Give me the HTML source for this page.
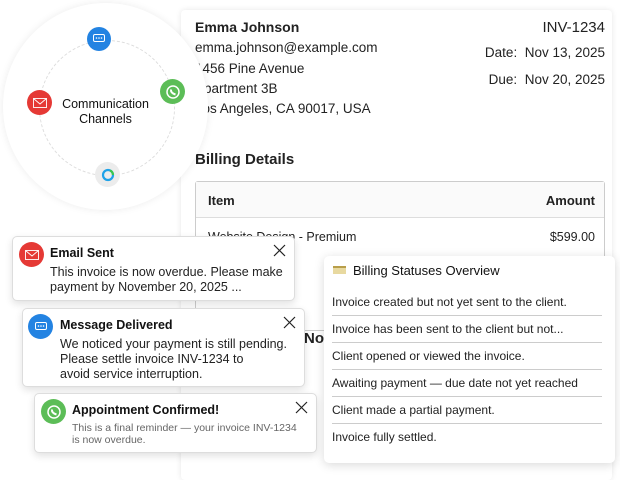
<!DOCTYPE html>
<html><head><style>
*{box-sizing:border-box;margin:0;padding:0}
body{width:620px;height:470px;background:#fff;font-family:"Liberation Sans",sans-serif;color:#111;position:relative;overflow:hidden}
.abs{position:absolute}
.card{position:absolute;left:181px;top:10px;width:431px;height:470px;background:#fff;border-radius:4px;box-shadow:0 0 6px rgba(0,0,0,.1)}
.t{position:absolute;font-size:13.5px;color:#222;white-space:nowrap}
.circle{position:absolute;left:3px;top:3px;width:205px;height:207px;border-radius:50%;background:#fff;box-shadow:0 0 8px rgba(0,0,0,.08)}
.dash{position:absolute;left:36px;top:37px;width:136px;height:136px;border-radius:50%;border:1px dashed #ddd}
.ic{position:absolute;border-radius:50%;display:flex;align-items:center;justify-content:center}
.note{position:absolute;background:#fff;border:1px solid #ddd;border-radius:5px;box-shadow:0 3px 8px rgba(0,0,0,.12)}
.note h4{position:absolute;left:37px;top:9px;font-size:12.5px;font-weight:bold;color:#111}
.note p{position:absolute;left:37px;font-size:12.5px;line-height:15px;color:#222;white-space:nowrap}
.x{position:absolute;width:13px;height:13px}
.row{position:absolute;left:8px;width:270px;font-size:12px;color:#222;border-bottom:1px solid #ccc;height:27px;line-height:26px;white-space:nowrap}
</style></head><body>
<div class="card">
<div class="t" style="left:14px;top:9px;font-weight:bold;font-size:14px">Emma Johnson</div>
<div class="t" style="left:14px;top:30px">emma.johnson@example.com</div>
<div class="t" style="left:14px;top:51px">1456 Pine Avenue</div>
<div class="t" style="left:14px;top:71px">Apartment 3B</div>
<div class="t" style="left:14px;top:91px">Los Angeles, CA 90017, USA</div>
<div class="t" style="right:7px;top:9px;font-size:15px">INV-1234</div>
<div class="t" style="right:7px;top:35px">Date:&nbsp; Nov 13, 2025</div>
<div class="t" style="right:7px;top:62px">Due:&nbsp; Nov 20, 2025</div>
<div class="t" style="left:14px;top:141px;font-size:15px;font-weight:bold">Billing Details</div>
<div class="abs" style="left:14px;top:171px;width:410px;height:150px;border:1px solid #ccc;border-radius:3px">
<div class="abs" style="left:0;top:0;width:408px;height:36px;background:#fafafa;border-bottom:1px solid #ddd"></div>
<div class="t" style="left:12px;top:11px;font-weight:bold;font-size:13px">Item</div>
<div class="t" style="right:9px;top:11px;font-weight:bold;font-size:13px">Amount</div>
<div class="t" style="left:12px;top:48px;font-size:12.5px">Website Design - Premium</div>
<div class="t" style="right:9px;top:48px;font-size:12.5px">$599.00</div>
</div>
<div class="t" style="left:123px;top:320px;font-size:15px;font-weight:bold">No</div>
</div>
<div class="circle">
<div class="dash"></div>
<div class="ic" style="left:84px;top:24px;width:24px;height:24px;background:#2383e2"><svg width="12" height="10"><rect x=".5" y=".5" width="11" height="7" rx="1.5" fill="none" stroke="#fff"/><circle cx="3.5" cy="4" r=".8" fill="#fff"/><circle cx="6" cy="4" r=".8" fill="#fff"/><circle cx="8.5" cy="4" r=".8" fill="#fff"/></svg></div>
<div class="ic" style="left:157px;top:76px;width:25px;height:25px;background:#5cbd57"><svg width="14" height="14"><circle cx="7" cy="7" r="6" fill="none" stroke="#fff" stroke-width="1.5"/><path d="M5 4.5 Q4.5 8 9.5 9.5" stroke="#fff" stroke-width="2" fill="none"/></svg></div>
<div class="ic" style="left:24px;top:87px;width:25px;height:25px;background:#e53935"><svg width="14" height="10"><rect x=".5" y=".5" width="13" height="9" fill="none" stroke="#fff" stroke-width=".9"/><path d="M.5 .5 L7 6 L13.5 .5" fill="none" stroke="#fff" stroke-width=".9"/></svg></div>
<div class="ic" style="left:92px;top:159px;width:25px;height:25px;background:#ececec"><svg width="14" height="14"><circle cx="7" cy="7" r="5" fill="none" stroke="#1ea2e8" stroke-width="2.2"/><path d="M9 2.5 A5 5 0 0 1 12 7" stroke="#3cc84a" stroke-width="2.2" fill="none"/></svg></div>
<div class="abs" style="left:50px;top:94px;width:105px;text-align:center;font-size:12.5px;line-height:15px;color:#111">Communication<br>Channels</div>
</div>

<div class="note" style="left:12px;top:236px;width:283px;height:65px">
<div class="ic" style="left:6px;top:5px;width:25px;height:25px;background:#e53935"><svg width="14" height="10"><rect x=".5" y=".5" width="13" height="9" fill="none" stroke="#fff" stroke-width=".9"/><path d="M.5 .5 L7 6 L13.5 .5" fill="none" stroke="#fff" stroke-width=".9"/></svg></div>
<h4>Email Sent</h4><svg class="x" style="left:260px;top:7px"><path d="M1 1L12 12M12 1L1 12" stroke="#222" stroke-width="1.2"/></svg>
<p style="top:28px">This invoice is now overdue. Please make<br>payment by November 20, 2025 ...</p>
</div>
<div class="note" style="left:22px;top:308px;width:283px;height:79px">
<div class="ic" style="left:5px;top:5px;width:25px;height:25px;background:#2383e2"><svg width="12" height="10"><rect x=".5" y=".5" width="11" height="7" rx="1.5" fill="none" stroke="#fff"/><circle cx="3.5" cy="4" r=".8" fill="#fff"/><circle cx="6" cy="4" r=".8" fill="#fff"/><circle cx="8.5" cy="4" r=".8" fill="#fff"/></svg></div>
<h4>Message Delivered</h4><svg class="x" style="left:260px;top:7px"><path d="M1 1L12 12M12 1L1 12" stroke="#222" stroke-width="1.2"/></svg>
<p style="top:28px">We noticed your payment is still pending.<br>Please settle invoice INV-1234 to<br>avoid service interruption.</p>
</div>
<div class="note" style="left:34px;top:393px;width:283px;height:60px">
<div class="ic" style="left:6px;top:5px;width:25px;height:25px;background:#5cbd57"><svg width="14" height="14"><circle cx="7" cy="7" r="6" fill="none" stroke="#fff" stroke-width="1.5"/><path d="M5 4.5 Q4.5 8 9.5 9.5" stroke="#fff" stroke-width="2" fill="none"/></svg></div>
<h4>Appointment Confirmed!</h4><svg class="x" style="left:260px;top:7px"><path d="M1 1L12 12M12 1L1 12" stroke="#222" stroke-width="1.2"/></svg>
<p style="top:28px;font-size:10.5px;line-height:12px;color:#666">This is a final reminder — your invoice INV-1234<br>is now overdue.</p>
</div>

<div class="abs" style="left:324px;top:256px;width:291px;height:207px;background:#fff;border-radius:5px;box-shadow:0 2px 10px rgba(0,0,0,.15)">
<div class="abs" style="left:9px;top:10px;width:13px;height:8px;background:#e8d9a0;border-top:2px solid #b89e4a"></div>
<div class="t" style="left:29px;top:7px;font-size:13px;color:#111">Billing Statuses Overview</div>
<div class="row" style="top:33px">Invoice created but not yet sent to the client.</div>
<div class="row" style="top:60px">Invoice has been sent to the client but not...</div>
<div class="row" style="top:87px">Client opened or viewed the invoice.</div>
<div class="row" style="top:114px">Awaiting payment — due date not yet reached</div>
<div class="row" style="top:141px">Client made a partial payment.</div>
<div class="row" style="top:168px;border:none">Invoice fully settled.</div>
</div>
</body></html>
